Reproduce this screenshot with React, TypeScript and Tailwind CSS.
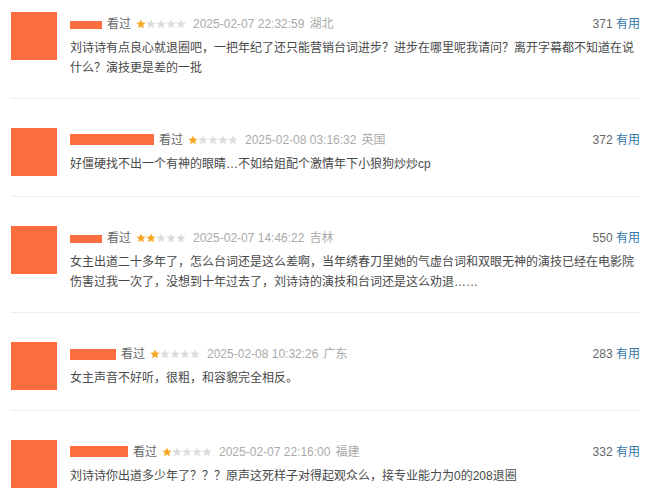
import React from "react";

type Item = {
  barW: number;
  barH: number;
  barTop: number;
  rating: number;
  date: string;
  loc: string;
  votes: number;
  text: string;
};

const items: Item[] = [
  {
    barW: 32,
    barH: 8,
    barTop: 7,
    rating: 1,
    date: "2025-02-07 22:32:59",
    loc: "湖北",
    votes: 371,
    text: "刘诗诗有点良心就退圈吧，一把年纪了还只能营销台词进步？进步在哪里呢我请问？离开字幕都不知道在说什么？演技更是差的一批",
  },
  {
    barW: 84,
    barH: 11,
    barTop: 4,
    rating: 1,
    date: "2025-02-08 03:16:32",
    loc: "英国",
    votes: 372,
    text: "好僵硬找不出一个有神的眼睛…不如给姐配个激情年下小狼狗炒炒cp",
  },
  {
    barW: 32,
    barH: 8,
    barTop: 7,
    rating: 2,
    date: "2025-02-07 14:46:22",
    loc: "吉林",
    votes: 550,
    text: "女主出道二十多年了，怎么台词还是这么差啊，当年绣春刀里她的气虚台词和双眼无神的演技已经在电影院伤害过我一次了，没想到十年过去了，刘诗诗的演技和台词还是这么劝退……",
  },
  {
    barW: 46,
    barH: 11,
    barTop: 5,
    rating: 1,
    date: "2025-02-08 10:32:26",
    loc: "广东",
    votes: 283,
    text: "女主声音不好听，很粗，和容貌完全相反。",
  },
  {
    barW: 58,
    barH: 11,
    barTop: 4,
    rating: 1,
    date: "2025-02-07 22:16:00",
    loc: "福建",
    votes: 332,
    text: "刘诗诗你出道多少年了？？？原声这死样子对得起观众么，接专业能力为0的208退圈",
  },
];

function Star({ on }: { on: boolean }) {
  return (
    <svg width="10" height="10" viewBox="0 0 10 10" className="block">
      <polygon
        points="5,0.4 6.3,3.5 9.7,3.7 7.1,5.9 7.9,9.3 5,7.5 2.1,9.3 2.9,5.9 0.3,3.7 3.7,3.5"
        fill={on ? "#f7a724" : "#dcdcdc"}
      />
    </svg>
  );
}

export default function App() {
  return (
    <div
      className="w-[660px] h-[493px] bg-white overflow-hidden pl-[11px] pr-[20px]"
      style={{ fontFamily: '"Liberation Sans", "Noto Sans CJK SC", sans-serif' }}
    >
      {items.map((it, i) => (
        <div
          key={i}
          className={`flex items-start border-b border-[#eeeeee] pb-[20px] ${i === 0 ? "pt-[12px]" : "pt-[29px]"}`}
        >
          <div className="w-[46px] h-[48px] bg-[#fe6d40] shrink-0" />
          <div className="ml-[13px] flex-1 min-w-0">
            <div className="mt-[2px] h-[20px] flex items-center text-[12px] leading-[20px]">
              <div className="relative h-[20px] shrink-0" style={{ width: it.barW }}>
                <div
                  className="absolute left-0 bg-[#fe6d40]"
                  style={{ top: it.barTop, height: it.barH, width: it.barW }}
                />
              </div>
              <span className="ml-[5px] text-[#666666]">看过</span>
              <span className="ml-[5px] flex">
                {[0, 1, 2, 3, 4].map((s) => (
                  <Star key={s} on={s < it.rating} />
                ))}
              </span>
              <span className="ml-[7px] text-[#aaaaaa]">{it.date}</span>
              <span className="ml-[5px] text-[#aaaaaa]">{it.loc}</span>
              <span className="ml-auto text-[#666666]">
                {it.votes} <span className="text-[#3377aa]">有用</span>
              </span>
            </div>
            <p className="mt-[4px] text-[12px] leading-[20px] text-[#494949] break-all">
              {it.text}
            </p>
          </div>
        </div>
      ))}
    </div>
  );
}
